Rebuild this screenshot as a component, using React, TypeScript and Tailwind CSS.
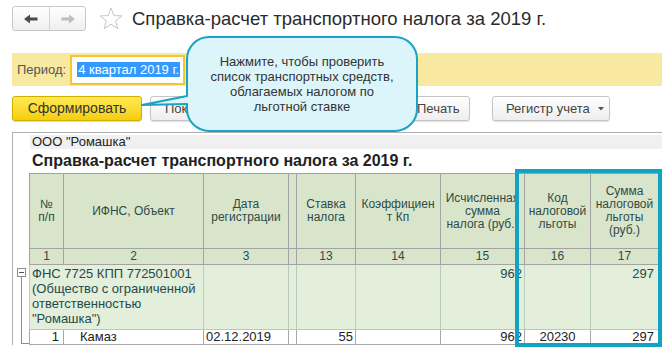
import React from "react";

const cols = "grid grid-cols-[16px_35px_140px_85px_8px_59px_85px_84px_66px_68px]";

function HCell({ children, className = "" }: { children?: React.ReactNode; className?: string }) {
  return (
    <div className={`border-r border-b border-[#a3a3a3] bg-[#d9e5cb] text-[#2f4b47] text-[12px] leading-[13px] flex items-center justify-center text-center ${className}`}>
      {children}
    </div>
  );
}

export default function App() {
  return (
    <div className="relative w-[662px] h-[347px] overflow-hidden bg-white font-['Liberation_Sans',Arial,sans-serif] text-[#333]">
      {/* Nav row */}
      <div className="flex items-center h-[25px] mt-[6px] ml-3">
        <div className="flex h-[25px] w-[74px] border border-[#c9c9c9] rounded-[3px] bg-gradient-to-b from-white to-[#efefef]">
          <div className="w-[37px] flex items-center justify-center border-r border-[#d2d2d2]">
            <svg width="14" height="10" viewBox="0 0 14 10"><path d="M0 5 L6 0.5 V3.5 H13.5 V6.5 H6 V9.5 Z" fill="#4a4a4a" /></svg>
          </div>
          <div className="flex-1 flex items-center justify-center">
            <svg width="14" height="10" viewBox="0 0 14 10"><path d="M14 5 L8 0.5 V3.5 H0.5 V6.5 H8 V9.5 Z" fill="#bdbdbd" /></svg>
          </div>
        </div>
        <svg className="ml-[13px]" width="24" height="23" viewBox="0 0 24 23">
          <path d="M12 1 L14.9 8.6 L23 8.9 L16.6 13.9 L18.9 21.7 L12 17.2 L5.1 21.7 L7.4 13.9 L1 8.9 L9.1 8.6 Z" fill="none" stroke="#c6c6c6" strokeWidth="1" strokeLinejoin="round" />
        </svg>
        <div className="ml-[9px] text-[18.5px] leading-[25px] text-[#2b2b2b]">Справка-расчет транспортного налога за 2019 г.</div>
      </div>

      {/* Period bar */}
      <div className="mt-[22px] ml-3 h-[33px] bg-[#f9e8a0] flex items-center">
        <span className="ml-[5px] text-[13px] text-[#555]">Период:</span>
        <div className="ml-[4px] w-[115px] h-[30px] border-2 border-[#f4c630] bg-white flex items-center">
          <span className="ml-[5px] bg-[#3399ff] text-white text-[13px] leading-[15px] px-[1px]">4 квартал 2019 г.</span>
        </div>
      </div>

      {/* Buttons row */}
      <div className="mt-[10px] ml-3 flex h-[25px]">
        <div className="w-[130px] h-[25px] rounded-[3px] border border-[#d2ae00] bg-gradient-to-b from-[#ffe94f] to-[#f4cf00] flex items-center justify-center text-[14px] text-[#333] shadow-[0_1px_1px_rgba(0,0,0,0.15)]">Сформировать</div>
        <div className="ml-[8px] w-[246px] h-[25px] rounded-[3px] border border-[#c5c5c5] bg-gradient-to-b from-white to-[#eeeeee] flex items-center pl-[14px] text-[13px] text-[#444] shadow-[0_1px_1px_rgba(0,0,0,0.12)]">Показать</div>
        <div className="ml-[6px] w-[68px] h-[25px] rounded-[3px] border border-[#c5c5c5] bg-gradient-to-b from-white to-[#eeeeee] flex items-center pl-[14px] text-[13px] text-[#444] shadow-[0_1px_1px_rgba(0,0,0,0.12)]">Печать</div>
        <div className="ml-[22px] w-[118px] h-[25px] rounded-[3px] border border-[#c5c5c5] bg-gradient-to-b from-white to-[#eeeeee] flex items-center pl-[13px] text-[13px] text-[#444] shadow-[0_1px_1px_rgba(0,0,0,0.12)]">
          Регистр учета
          <svg className="ml-[8px]" width="6" height="4" viewBox="0 0 6 4"><path d="M0 0 H6 L3 3.5 Z" fill="#555" /></svg>
        </div>
      </div>

      {/* Report table */}
      <div className="mt-[11px] ml-3 border-l border-t border-[#b0b0b0]">
        <div className="h-[2px]" />
        <div className="ml-[17px] h-[14px] bg-[#f0f0f0] text-[13px] leading-[14px] text-[#222] pl-[2px]">ООО "Ромашка"</div>
        <div className="ml-[19px] h-[24px] text-[16px] font-bold leading-[24px] text-[#222]">Справка-расчет транспортного налога за 2019 г.</div>

        {/* header */}
        <div className={`${cols} h-[76px]`}>
          <div />
          <HCell className="border-l border-t">№<br />п/п</HCell>
          <HCell className="border-t">ИФНС, Объект</HCell>
          <HCell className="border-t">Дата<br />регистрации</HCell>
          <HCell className="border-t" />
          <HCell className="border-t">Ставка<br />налога</HCell>
          <HCell className="border-t">Коэффициен<br />т Кп</HCell>
          <HCell className="border-t overflow-hidden whitespace-nowrap">Исчисленная<br />сумма<br />налога (руб.)</HCell>
          <HCell className="border-t">Код<br />налоговой<br />льготы</HCell>
          <HCell className="border-t">Сумма<br />налоговой<br />льготы<br />(руб.)</HCell>
        </div>
        {/* number row */}
        <div className={`${cols} h-[16px]`}>
          <div />
          <HCell className="border-l">1</HCell>
          <HCell>2</HCell>
          <HCell>3</HCell>
          <HCell />
          <HCell>13</HCell>
          <HCell>14</HCell>
          <HCell>15</HCell>
          <HCell>16</HCell>
          <HCell>17</HCell>
        </div>
        {/* group row */}
        <div className={`${cols} h-[65px] text-[13px] leading-[15px] text-[#1f4a4a]`}>
          <div className="relative">
            <div className="absolute left-[4px] top-[3px] w-[9px] h-[9px] border border-[#8c8c8c] bg-white flex items-center justify-center">
              <div className="w-[5px] h-[1px] bg-[#555]" />
            </div>
            <div className="absolute left-[8px] top-[12px] bottom-0 w-[1px] bg-[#8c8c8c]" />
          </div>
          <div className="col-span-2 border-l border-r border-b border-[#b5cbbc] bg-[#e3eedb] pl-[2px] pt-[1px]">
            ФНС 7725 КПП 772501001<br />(Общество с ограниченной<br />ответственностью<br />"Ромашка")
          </div>
          <div className="border-r border-b border-[#b5cbbc] bg-[#e3eedb]" />
          <div className="border-r border-b border-[#b5cbbc] bg-[#e3eedb]" />
          <div className="border-r border-b border-[#b5cbbc] bg-[#e3eedb]" />
          <div className="border-r border-b border-[#b5cbbc] bg-[#e3eedb]" />
          <div className="border-r border-b border-[#b5cbbc] bg-[#e3eedb] text-right pr-[2px] pt-[1px]">962</div>
          <div className="border-r border-b border-[#b5cbbc] bg-[#e3eedb]" />
          <div className="border-r border-b border-[#b5cbbc] bg-[#e3eedb] text-right pr-[4px] pt-[1px]">297</div>
        </div>
        {/* data row */}
        <div className={`${cols} h-[15px] text-[13px] leading-[14px] text-[#222]`}>
          <div className="relative">
            <div className="absolute left-[8px] top-0 h-[13px] w-[1px] bg-[#8c8c8c]" />
            <div className="absolute left-[8px] top-[13px] w-[8px] h-[1px] bg-[#8c8c8c]" />
          </div>
          <div className="border-l border-r border-b border-[#a8a8a8] text-right pr-[4px]">1</div>
          <div className="border-r border-b border-[#a8a8a8] pl-[16px]">Камаз</div>
          <div className="border-r border-b border-[#a8a8a8] pl-[2px]">02.12.2019</div>
          <div className="border-r border-b border-[#a8a8a8]" />
          <div className="border-r border-b border-[#a8a8a8] text-right pr-[2px]">55</div>
          <div className="border-r border-b border-[#a8a8a8]" />
          <div className="border-r border-b border-[#a8a8a8] text-right pr-[2px]">962</div>
          <div className="border-r border-b border-[#a8a8a8] text-center">20230</div>
          <div className="border-r border-b border-[#a8a8a8] text-right pr-[4px]">297</div>
        </div>
      </div>

      {/* Highlight box */}
      <div className="absolute left-[515px] top-[169px] w-[147px] h-[178px] border-4 border-[#12a3c3]" />

      {/* Tooltip */}
      <svg className="absolute left-0 top-0" width="662" height="347" viewBox="0 0 662 347">
        <path
          d="M209 37 H395 A22 22 0 0 1 417 59 V109 A22 22 0 0 1 395 131 H209 A22 22 0 0 1 187 109 V104 L142 105 L187 96 V59 A22 22 0 0 1 209 37 Z"
          fill="#dcf5fb"
          stroke="#1aa3c2"
          strokeWidth="2"
          strokeLinejoin="round"
        />
      </svg>
      <div className="absolute left-[187px] top-[54px] w-[230px] text-center text-[13px] leading-[15px] text-[#333]">
        Нажмите, чтобы проверить<br />список транспортных средств,<br />облагаемых налогом по<br />льготной ставке
      </div>
    </div>
  );
}
